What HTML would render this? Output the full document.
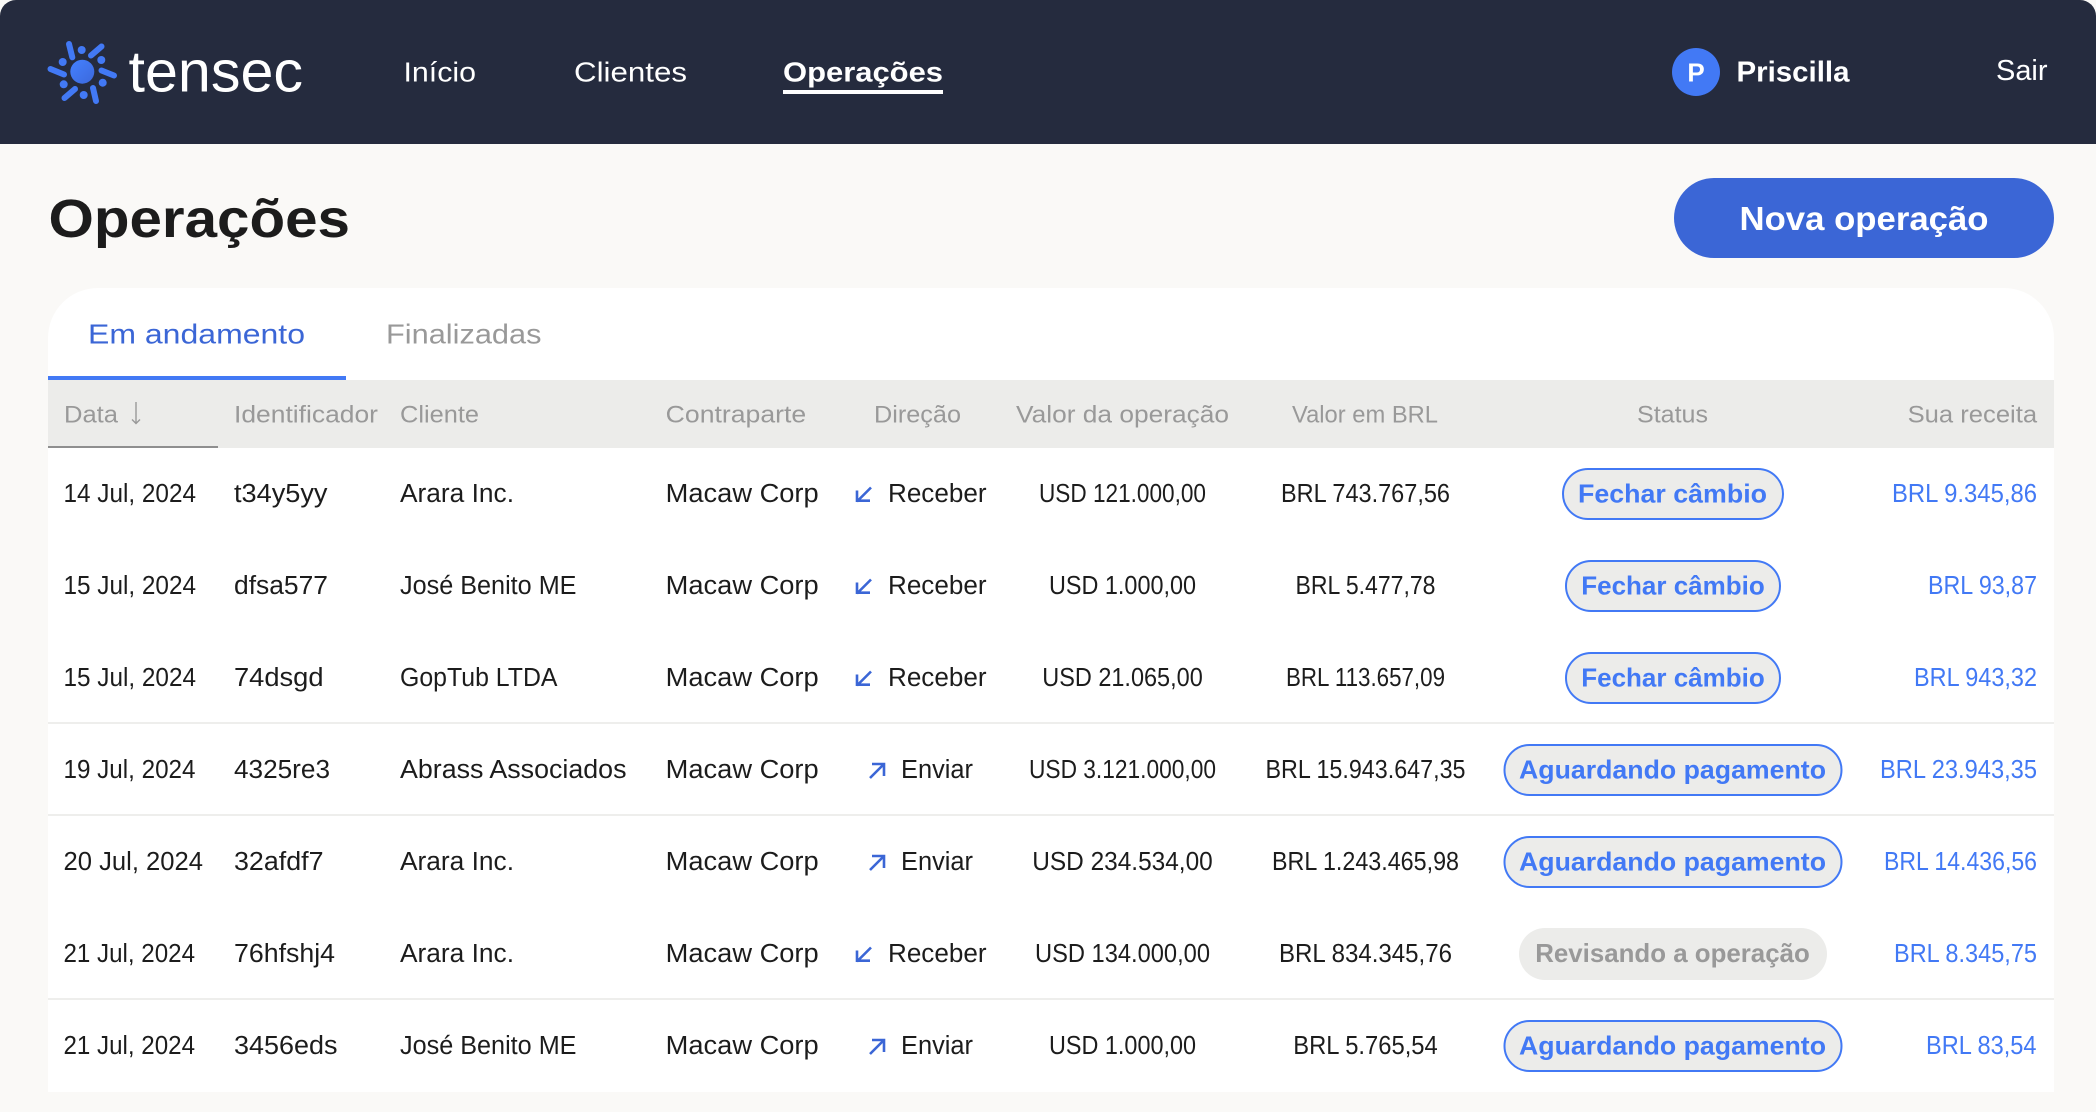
<!DOCTYPE html>
<html lang="pt"><head><meta charset="utf-8"><title>Operações</title>
<style>
html,body{margin:0;padding:0;width:2096px;height:1112px;overflow:hidden;background:#faf9f7}
svg{display:block}
text{font-family:"Liberation Sans",sans-serif;fill:#1c1c1c;font-size:25.5px}
.w{fill:#fff}.h{font-size:24.5px;fill:#999}.r{fill:#4279f5}.b{font-weight:700}.m{text-anchor:middle}.e{text-anchor:end}
.p{font-weight:700;fill:#4279f5;font-size:26px;text-anchor:middle}
</style></head><body>
<svg width="2096" height="1112" viewBox="0 0 2096 1112" xmlns="http://www.w3.org/2000/svg">
<defs><linearGradient id="g" x1="0" y1="0" x2="1" y2="1"><stop offset="0" stop-color="#4481ff"/><stop offset="1" stop-color="#3c68dc"/></linearGradient></defs>
<rect width="2096" height="1112" fill="#faf9f7"/>
<path d="M0 144V16A16 16 0 0 1 16 0H2080A16 16 0 0 1 2096 16V144Z" fill="#252b3e"/>
<g stroke="#4279f5" stroke-width="6" stroke-linecap="round">
<path d="M69 44L72.300 57.300M91 55.500L101.500 46.500M101.500 70.500L114 75.500M93 88L96 101M64.500 98L75 89M50.500 69L64 74.500"/></g>
<g fill="#4279f5"><circle cx="81.700" cy="50" r="4"/><circle cx="101.300" cy="60" r="4"/><circle cx="102.700" cy="82.700" r="4"/><circle cx="83.700" cy="95" r="4"/><circle cx="63.700" cy="84.300" r="4"/><circle cx="62.700" cy="62" r="4"/></g>
<circle cx="82.300" cy="71.700" r="12" fill="url(#g)"/>
<text class="w" x="128.500" y="91.700" style="font-size:58px" textLength="174.500" lengthAdjust="spacingAndGlyphs">tensec</text>
<text class="w" x="403.500" y="81.700" style="font-size:28px" textLength="72.500" lengthAdjust="spacingAndGlyphs">Início</text>
<text class="w" x="574" y="81.700" style="font-size:28px" textLength="113" lengthAdjust="spacingAndGlyphs">Clientes</text>
<text class="w b" x="783" y="81.700" style="font-size:28px" textLength="160" lengthAdjust="spacingAndGlyphs">Operações</text>
<rect x="783" y="90" width="160" height="4" fill="#fff"/>
<circle cx="1696" cy="72" r="24" fill="#4279f5"/>
<text class="w b m" x="1696" y="81.700" style="font-size:26px">P</text>
<text class="w b" x="1736.500" y="81.700" style="font-size:29px" textLength="113" lengthAdjust="spacingAndGlyphs">Priscilla</text>
<text class="w" x="1996" y="80" style="font-size:29px" textLength="51.500" lengthAdjust="spacingAndGlyphs">Sair</text>
<text class="b" x="48.500" y="237" style="font-size:54px" textLength="301.500" lengthAdjust="spacingAndGlyphs">Operações</text>
<rect x="1674" y="178" width="380" height="80" rx="40" fill="#3b66d6"/>
<text class="w b" x="1739.500" y="230" style="font-size:33px" textLength="249" lengthAdjust="spacingAndGlyphs">Nova operação</text>
<path d="M48 1092V338A50 50 0 0 1 98 288H2004A50 50 0 0 1 2054 338V1092Z" fill="#fff"/>
<text x="88" y="343.500" style="font-size:28px;fill:#3b66d6" textLength="217" lengthAdjust="spacingAndGlyphs">Em andamento</text>
<text x="386" y="343.500" style="font-size:28px;fill:#999" textLength="155.500" lengthAdjust="spacingAndGlyphs">Finalizadas</text>
<rect x="48" y="380" width="2006" height="68" fill="#ececea"/>
<rect x="48" y="376" width="298" height="4" fill="#4279f5"/>
<rect x="48" y="446" width="170" height="2" fill="#8f8f8f"/>
<text class="h" x="64" y="422.700" textLength="54" lengthAdjust="spacingAndGlyphs">Data</text>
<path d="M136 402V423.500M132 419.500L136 423.500L140 419.500" fill="none" stroke="#999" stroke-width="1.400"/>
<text class="h" x="234" y="422.700" textLength="144" lengthAdjust="spacingAndGlyphs">Identificador</text>
<text class="h" x="400" y="422.700" textLength="79" lengthAdjust="spacingAndGlyphs">Cliente</text>
<text class="h" x="665.700" y="422.700" textLength="140.500" lengthAdjust="spacingAndGlyphs">Contraparte</text>
<text class="h" x="874" y="422.700" textLength="87" lengthAdjust="spacingAndGlyphs">Direção</text>
<text class="h" x="1016" y="422.700" textLength="213" lengthAdjust="spacingAndGlyphs">Valor da operação</text>
<text class="h" x="1292" y="422.700" textLength="146" lengthAdjust="spacingAndGlyphs">Valor em BRL</text>
<text class="h" x="1637" y="422.700" textLength="71" lengthAdjust="spacingAndGlyphs">Status</text>
<text class="h" x="1907.600" y="422.700" textLength="129.500" lengthAdjust="spacingAndGlyphs">Sua receita</text>
<g fill="#eeeeec"><rect x="48" y="722" width="2006" height="2"/><rect x="48" y="814" width="2006" height="2"/><rect x="48" y="998" width="2006" height="2"/></g>

<g fill="none" stroke="#3b66d6" stroke-width="2.600">
<path d="M871 487.500L857 501.500M857 490.500V500.700H870"/>
<path d="M871 579.500L857 593.500M857 582.500V592.700H870"/>
<path d="M871 671.500L857 685.500M857 674.500V684.700H870"/>
<path d="M871 947.500L857 961.500M857 950.500V960.700H870"/>
<path d="M870 778L884 764M872 764H884V776"/>
<path d="M870 870L884 856M872 856H884V868"/>
<path d="M870 1054L884 1040M872 1040H884V1052"/>
</g>

<g>
<text x="63.500" y="502" textLength="132.500" lengthAdjust="spacingAndGlyphs">14 Jul, 2024</text>
<text x="234" y="502" textLength="93.500" lengthAdjust="spacingAndGlyphs">t34y5yy</text>
<text x="400" y="502" textLength="114" lengthAdjust="spacingAndGlyphs">Arara Inc.</text>
<text x="665.700" y="502" textLength="153" lengthAdjust="spacingAndGlyphs">Macaw Corp</text>
<text x="888" y="502" textLength="98.500" lengthAdjust="spacingAndGlyphs">Receber</text>
<text class="m" x="1122.500" y="502" textLength="167" lengthAdjust="spacingAndGlyphs">USD 121.000,00</text>
<text class="m" x="1365.500" y="502" textLength="169" lengthAdjust="spacingAndGlyphs">BRL 743.767,56</text>
<rect x="1563" y="469" width="220" height="50" rx="25" fill="#ececea" stroke="#4279f5" stroke-width="2"/>
<text class="p" x="1672.500" y="502.300" textLength="189" lengthAdjust="spacingAndGlyphs">Fechar câmbio</text>
<text class="r e" x="2037" y="502" textLength="145" lengthAdjust="spacingAndGlyphs">BRL 9.345,86</text>
</g>
<g>
<text x="63.500" y="594" textLength="132.500" lengthAdjust="spacingAndGlyphs">15 Jul, 2024</text>
<text x="234" y="594" textLength="94" lengthAdjust="spacingAndGlyphs">dfsa577</text>
<text x="400" y="594" textLength="176.500" lengthAdjust="spacingAndGlyphs">José Benito ME</text>
<text x="665.700" y="594" textLength="153" lengthAdjust="spacingAndGlyphs">Macaw Corp</text>
<text x="888" y="594" textLength="98.500" lengthAdjust="spacingAndGlyphs">Receber</text>
<text class="m" x="1122.500" y="594" textLength="147" lengthAdjust="spacingAndGlyphs">USD 1.000,00</text>
<text class="m" x="1365.500" y="594" textLength="140" lengthAdjust="spacingAndGlyphs">BRL 5.477,78</text>
<rect x="1566" y="561" width="214" height="50" rx="25" fill="#ececea" stroke="#4279f5" stroke-width="2"/>
<text class="p" x="1673" y="594.300" textLength="183.500" lengthAdjust="spacingAndGlyphs">Fechar câmbio</text>
<text class="r e" x="2037" y="594" textLength="109" lengthAdjust="spacingAndGlyphs">BRL 93,87</text>
</g>
<g>
<text x="63.500" y="686" textLength="132.500" lengthAdjust="spacingAndGlyphs">15 Jul, 2024</text>
<text x="234" y="686" textLength="89.500" lengthAdjust="spacingAndGlyphs">74dsgd</text>
<text x="400" y="686" textLength="157.500" lengthAdjust="spacingAndGlyphs">GopTub LTDA</text>
<text x="665.700" y="686" textLength="153" lengthAdjust="spacingAndGlyphs">Macaw Corp</text>
<text x="888" y="686" textLength="98.500" lengthAdjust="spacingAndGlyphs">Receber</text>
<text class="m" x="1122.500" y="686" textLength="160.500" lengthAdjust="spacingAndGlyphs">USD 21.065,00</text>
<text class="m" x="1365.500" y="686" textLength="159" lengthAdjust="spacingAndGlyphs">BRL 113.657,09</text>
<rect x="1566" y="653" width="214" height="50" rx="25" fill="#ececea" stroke="#4279f5" stroke-width="2"/>
<text class="p" x="1673" y="686.300" textLength="183.500" lengthAdjust="spacingAndGlyphs">Fechar câmbio</text>
<text class="r e" x="2037" y="686" textLength="123" lengthAdjust="spacingAndGlyphs">BRL 943,32</text>
</g>
<g>
<text x="63.500" y="778" textLength="132" lengthAdjust="spacingAndGlyphs">19 Jul, 2024</text>
<text x="234" y="778" textLength="96" lengthAdjust="spacingAndGlyphs">4325re3</text>
<text x="400" y="778" textLength="226.500" lengthAdjust="spacingAndGlyphs">Abrass Associados</text>
<text x="665.700" y="778" textLength="153" lengthAdjust="spacingAndGlyphs">Macaw Corp</text>
<text x="901" y="778" textLength="72" lengthAdjust="spacingAndGlyphs">Enviar</text>
<text class="m" x="1122.500" y="778" textLength="187" lengthAdjust="spacingAndGlyphs">USD 3.121.000,00</text>
<text class="m" x="1365.500" y="778" textLength="200" lengthAdjust="spacingAndGlyphs">BRL 15.943.647,35</text>
<rect x="1504.500" y="745" width="337" height="50" rx="25" fill="#ececea" stroke="#4279f5" stroke-width="2"/>
<text class="p" x="1672.500" y="778.300" textLength="307" lengthAdjust="spacingAndGlyphs">Aguardando pagamento</text>
<text class="r e" x="2037" y="778" textLength="157" lengthAdjust="spacingAndGlyphs">BRL 23.943,35</text>
</g>
<g>
<text x="63.500" y="870" textLength="139.500" lengthAdjust="spacingAndGlyphs">20 Jul, 2024</text>
<text x="234" y="870" textLength="89.500" lengthAdjust="spacingAndGlyphs">32afdf7</text>
<text x="400" y="870" textLength="114" lengthAdjust="spacingAndGlyphs">Arara Inc.</text>
<text x="665.700" y="870" textLength="153" lengthAdjust="spacingAndGlyphs">Macaw Corp</text>
<text x="901" y="870" textLength="72" lengthAdjust="spacingAndGlyphs">Enviar</text>
<text class="m" x="1122.500" y="870" textLength="180.500" lengthAdjust="spacingAndGlyphs">USD 234.534,00</text>
<text class="m" x="1365.500" y="870" textLength="187" lengthAdjust="spacingAndGlyphs">BRL 1.243.465,98</text>
<rect x="1504.500" y="837" width="337" height="50" rx="25" fill="#ececea" stroke="#4279f5" stroke-width="2"/>
<text class="p" x="1672.500" y="870.300" textLength="307" lengthAdjust="spacingAndGlyphs">Aguardando pagamento</text>
<text class="r e" x="2037" y="870" textLength="153" lengthAdjust="spacingAndGlyphs">BRL 14.436,56</text>
</g>
<g>
<text x="63.500" y="962" textLength="131.500" lengthAdjust="spacingAndGlyphs">21 Jul, 2024</text>
<text x="234" y="962" textLength="101" lengthAdjust="spacingAndGlyphs">76hfshj4</text>
<text x="400" y="962" textLength="114" lengthAdjust="spacingAndGlyphs">Arara Inc.</text>
<text x="665.700" y="962" textLength="153" lengthAdjust="spacingAndGlyphs">Macaw Corp</text>
<text x="888" y="962" textLength="98.500" lengthAdjust="spacingAndGlyphs">Receber</text>
<text class="m" x="1122.500" y="962" textLength="175" lengthAdjust="spacingAndGlyphs">USD 134.000,00</text>
<text class="m" x="1365.500" y="962" textLength="173" lengthAdjust="spacingAndGlyphs">BRL 834.345,76</text>
<rect x="1519" y="928" width="308" height="52" rx="26" fill="#ececea"/>
<text class="p" x="1672.500" y="962" style="fill:#999" textLength="274.500" lengthAdjust="spacingAndGlyphs">Revisando a operação</text>
<text class="r e" x="2037" y="962" textLength="143" lengthAdjust="spacingAndGlyphs">BRL 8.345,75</text>
</g>
<g>
<text x="63.500" y="1054" textLength="131.500" lengthAdjust="spacingAndGlyphs">21 Jul, 2024</text>
<text x="234" y="1054" textLength="103.500" lengthAdjust="spacingAndGlyphs">3456eds</text>
<text x="400" y="1054" textLength="176.500" lengthAdjust="spacingAndGlyphs">José Benito ME</text>
<text x="665.700" y="1054" textLength="153" lengthAdjust="spacingAndGlyphs">Macaw Corp</text>
<text x="901" y="1054" textLength="72" lengthAdjust="spacingAndGlyphs">Enviar</text>
<text class="m" x="1122.500" y="1054" textLength="147" lengthAdjust="spacingAndGlyphs">USD 1.000,00</text>
<text class="m" x="1365.500" y="1054" textLength="144.500" lengthAdjust="spacingAndGlyphs">BRL 5.765,54</text>
<rect x="1504.500" y="1021" width="337" height="50" rx="25" fill="#ececea" stroke="#4279f5" stroke-width="2"/>
<text class="p" x="1672.500" y="1054.300" textLength="307" lengthAdjust="spacingAndGlyphs">Aguardando pagamento</text>
<text class="r e" x="2036.500" y="1054" textLength="110.500" lengthAdjust="spacingAndGlyphs">BRL 83,54</text>
</g>
</svg>
</body></html>
